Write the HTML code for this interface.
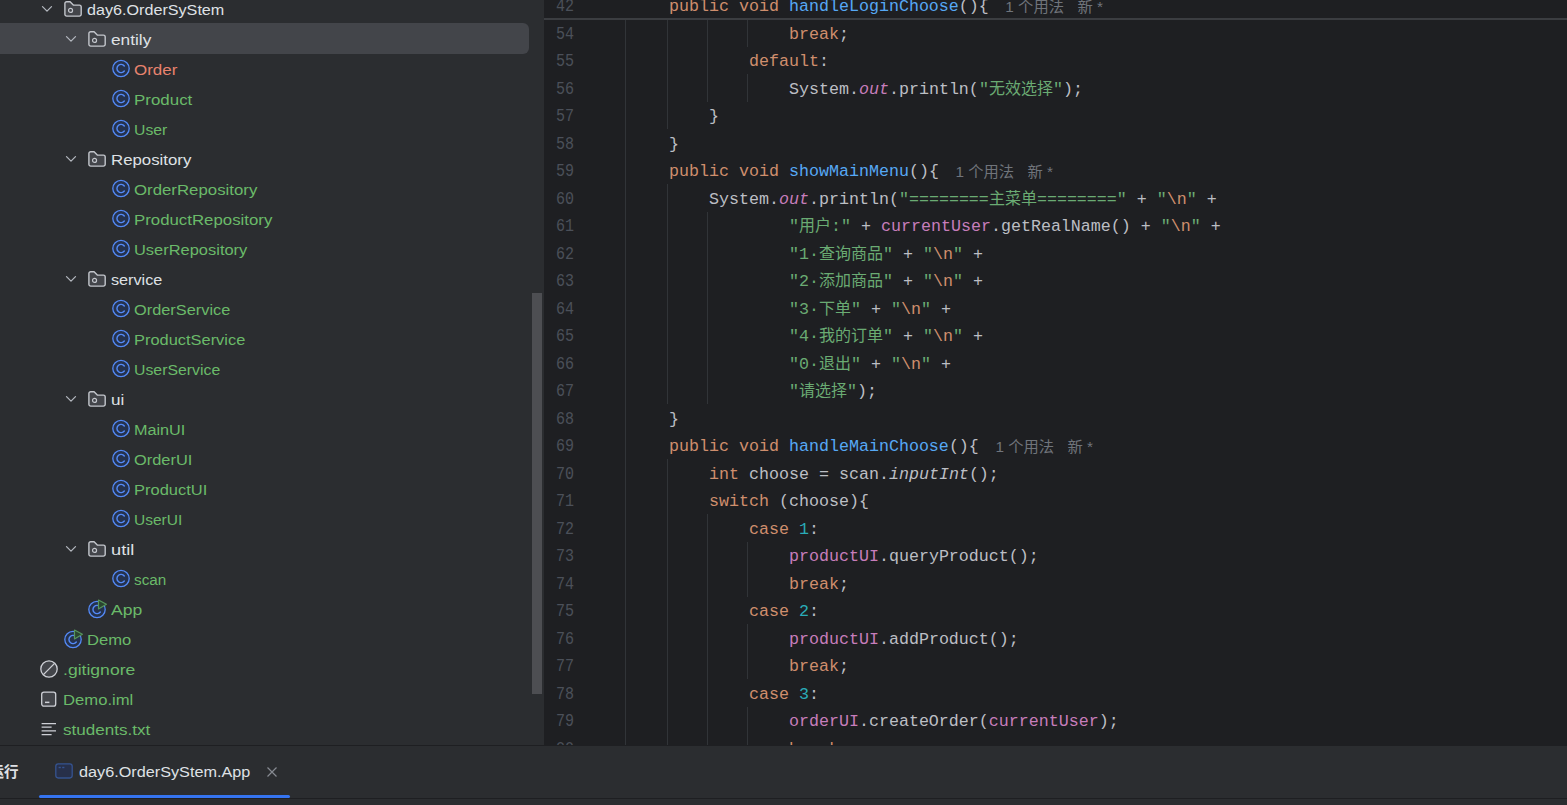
<!DOCTYPE html>
<html lang="zh-CN"><head><meta charset="utf-8"><title>IDE</title>
<style>
html,body{margin:0;padding:0;background:#2b2d30;}
body{width:1567px;height:805px;overflow:hidden;position:relative;font-family:"Liberation Sans","Noto Sans CJK SC",sans-serif;}
#left{position:absolute;left:0;top:0;width:544px;height:745px;background:#2b2d30;overflow:hidden}
#sel{position:absolute;left:-10px;top:23.2px;width:539px;height:30.4px;border-radius:6px;background:#43454a}
#sb{position:absolute;left:532px;top:293px;width:10px;height:401px;background:#4d4e52}
.ic{position:absolute;overflow:visible}
.tl{position:absolute;height:30px;line-height:30px;font-size:15.4px;white-space:pre;transform-origin:0 50%}
#ed{position:absolute;left:544px;top:0;width:1023px;height:745px;background:#1e1f22;overflow:hidden;}
#edi{position:absolute;left:-544px;top:0;width:1567px;height:745px;font-family:"Liberation Mono","Noto Sans CJK SC",monospace;font-size:16.67px;color:#bcbec4}
.ln{position:absolute;left:544px;width:30px;text-align:right;height:27.5px;line-height:27.5px;color:#4b5059;transform:scale(.9,1.09);transform-origin:100% 44.5%;margin-top:-1px}
.cl{position:absolute;left:629px;height:27.5px;line-height:27.5px;white-space:pre}
.gd{position:absolute;width:1px;background:#313438}
#gl{position:absolute;left:625px;top:0;width:1px;height:745px;background:#313438}
#st{position:absolute;left:544px;top:-10px;width:1023px;height:28px;background:#1e1f22;border-bottom:2px solid #3b3d41}
.k{color:#cf8e6d}.m{color:#56a8f5}.s{color:#6aab73}.f{color:#c77dbb}.fi{color:#c77dbb;font-style:italic}.n{color:#2aacb8}.i{font-style:italic}
.c{font-size:16px}
.h{font-family:"Liberation Sans","Noto Sans CJK SC",sans-serif;font-size:15.3px;color:#70747b;display:inline-block;vertical-align:top}
.h1{margin-left:16.5px}.h2{margin-left:13.5px}
#bot{position:absolute;left:0;top:745px;width:1567px;height:60px;background:#2b2d30;border-top:1px solid #1e1f22;box-sizing:border-box}
#bl{position:absolute;left:0;top:52px;width:1567px;height:1px;background:#1e1f22}
#ul{position:absolute;left:39px;top:49px;width:251px;height:3px;background:#3574f0;border-radius:1.5px}
#run{position:absolute;left:-10.5px;top:11px;height:30px;line-height:30px;font-size:14.5px;font-weight:bold;color:#dfe1e5;white-space:pre}
#tab{position:absolute;left:79px;top:11.3px;height:30px;line-height:30px;font-size:15.4px;color:#dfe1e5;white-space:pre;transform-origin:0 50%}
</style></head><body>
<div id="left"><div id="sel"></div>
<svg class="ic" style="left:40px;top:4px" width="14" height="10" viewBox="0 0 14 10"><path d="M2.5 2.6 L7 7.1 L11.5 2.6" fill="none" stroke="#b4b8bf" stroke-width="1.3" stroke-linecap="round" stroke-linejoin="round"/></svg>
<svg class="ic" style="left:64px;top:1px" width="20" height="18" viewBox="0 0 20 18"><path d="M0.9 2.6 a1.8 1.8 0 0 1 1.8-1.8 h3.4 l3.2 3.3 h6.1 a1.8 1.8 0 0 1 1.8 1.8 v7.4 a1.8 1.8 0 0 1-1.8 1.8 h-12.7 a1.8 1.8 0 0 1-1.8-1.8 z" fill="#43454a" stroke="#c3c6cc" stroke-width="1.4" stroke-linejoin="round"/><circle cx="6.55" cy="9.4" r="2" fill="none" stroke="#c3c6cc" stroke-width="1.2"/></svg>
<span class="tl" id="t0" style="left:87px;top:-5.4px;color:#dfe1e5;transform:scaleX(1.0491)">day6.OrderSyStem</span>
<svg class="ic" style="left:64px;top:34px" width="14" height="10" viewBox="0 0 14 10"><path d="M2.5 2.6 L7 7.1 L11.5 2.6" fill="none" stroke="#b4b8bf" stroke-width="1.3" stroke-linecap="round" stroke-linejoin="round"/></svg>
<svg class="ic" style="left:88px;top:31px" width="20" height="18" viewBox="0 0 20 18"><path d="M0.9 2.6 a1.8 1.8 0 0 1 1.8-1.8 h3.4 l3.2 3.3 h6.1 a1.8 1.8 0 0 1 1.8 1.8 v7.4 a1.8 1.8 0 0 1-1.8 1.8 h-12.7 a1.8 1.8 0 0 1-1.8-1.8 z" fill="#43454a" stroke="#c3c6cc" stroke-width="1.4" stroke-linejoin="round"/><circle cx="6.55" cy="9.4" r="2" fill="none" stroke="#c3c6cc" stroke-width="1.2"/></svg>
<span class="tl" id="t1" style="left:111px;top:24.6px;color:#dfe1e5;transform:scaleX(1.1214)">entily</span>
<svg class="ic" style="left:111px;top:57.8px" width="22" height="22" viewBox="0 0 22 22"><circle cx="10" cy="10.5" r="8.2" fill="#25324d" stroke="#548af7" stroke-width="1.3"/><path d="M13.3 8 a4.1 4.1 0 1 0 0 5" fill="none" stroke="#548af7" stroke-width="1.4" stroke-linecap="round"/></svg>
<span class="tl" id="t2" style="left:134px;top:54.6px;color:#e8836e;transform:scaleX(1.1006)">Order</span>
<svg class="ic" style="left:111px;top:87.8px" width="22" height="22" viewBox="0 0 22 22"><circle cx="10" cy="10.5" r="8.2" fill="#25324d" stroke="#548af7" stroke-width="1.3"/><path d="M13.3 8 a4.1 4.1 0 1 0 0 5" fill="none" stroke="#548af7" stroke-width="1.4" stroke-linecap="round"/></svg>
<span class="tl" id="t3" style="left:134px;top:84.6px;color:#6aba69;transform:scaleX(1.099)">Product</span>
<svg class="ic" style="left:111px;top:117.8px" width="22" height="22" viewBox="0 0 22 22"><circle cx="10" cy="10.5" r="8.2" fill="#25324d" stroke="#548af7" stroke-width="1.3"/><path d="M13.3 8 a4.1 4.1 0 1 0 0 5" fill="none" stroke="#548af7" stroke-width="1.4" stroke-linecap="round"/></svg>
<span class="tl" id="t4" style="left:134px;top:114.6px;color:#6aba69;transform:scaleX(1.0246)">User</span>
<svg class="ic" style="left:64px;top:154px" width="14" height="10" viewBox="0 0 14 10"><path d="M2.5 2.6 L7 7.1 L11.5 2.6" fill="none" stroke="#b4b8bf" stroke-width="1.3" stroke-linecap="round" stroke-linejoin="round"/></svg>
<svg class="ic" style="left:88px;top:151px" width="20" height="18" viewBox="0 0 20 18"><path d="M0.9 2.6 a1.8 1.8 0 0 1 1.8-1.8 h3.4 l3.2 3.3 h6.1 a1.8 1.8 0 0 1 1.8 1.8 v7.4 a1.8 1.8 0 0 1-1.8 1.8 h-12.7 a1.8 1.8 0 0 1-1.8-1.8 z" fill="#43454a" stroke="#c3c6cc" stroke-width="1.4" stroke-linejoin="round"/><circle cx="6.55" cy="9.4" r="2" fill="none" stroke="#c3c6cc" stroke-width="1.2"/></svg>
<span class="tl" id="t5" style="left:111px;top:144.6px;color:#dfe1e5;transform:scaleX(1.0914)">Repository</span>
<svg class="ic" style="left:111px;top:177.8px" width="22" height="22" viewBox="0 0 22 22"><circle cx="10" cy="10.5" r="8.2" fill="#25324d" stroke="#548af7" stroke-width="1.3"/><path d="M13.3 8 a4.1 4.1 0 1 0 0 5" fill="none" stroke="#548af7" stroke-width="1.4" stroke-linecap="round"/></svg>
<span class="tl" id="t6" style="left:134px;top:174.6px;color:#6aba69;transform:scaleX(1.0921)">OrderRepository</span>
<svg class="ic" style="left:111px;top:207.8px" width="22" height="22" viewBox="0 0 22 22"><circle cx="10" cy="10.5" r="8.2" fill="#25324d" stroke="#548af7" stroke-width="1.3"/><path d="M13.3 8 a4.1 4.1 0 1 0 0 5" fill="none" stroke="#548af7" stroke-width="1.4" stroke-linecap="round"/></svg>
<span class="tl" id="t7" style="left:134px;top:204.6px;color:#6aba69;transform:scaleX(1.0923)">ProductRepository</span>
<svg class="ic" style="left:111px;top:237.8px" width="22" height="22" viewBox="0 0 22 22"><circle cx="10" cy="10.5" r="8.2" fill="#25324d" stroke="#548af7" stroke-width="1.3"/><path d="M13.3 8 a4.1 4.1 0 1 0 0 5" fill="none" stroke="#548af7" stroke-width="1.4" stroke-linecap="round"/></svg>
<span class="tl" id="t8" style="left:134px;top:234.6px;color:#6aba69;transform:scaleX(1.0682)">UserRepository</span>
<svg class="ic" style="left:64px;top:274px" width="14" height="10" viewBox="0 0 14 10"><path d="M2.5 2.6 L7 7.1 L11.5 2.6" fill="none" stroke="#b4b8bf" stroke-width="1.3" stroke-linecap="round" stroke-linejoin="round"/></svg>
<svg class="ic" style="left:88px;top:271px" width="20" height="18" viewBox="0 0 20 18"><path d="M0.9 2.6 a1.8 1.8 0 0 1 1.8-1.8 h3.4 l3.2 3.3 h6.1 a1.8 1.8 0 0 1 1.8 1.8 v7.4 a1.8 1.8 0 0 1-1.8 1.8 h-12.7 a1.8 1.8 0 0 1-1.8-1.8 z" fill="#43454a" stroke="#c3c6cc" stroke-width="1.4" stroke-linejoin="round"/><circle cx="6.55" cy="9.4" r="2" fill="none" stroke="#c3c6cc" stroke-width="1.2"/></svg>
<span class="tl" id="t9" style="left:111px;top:264.6px;color:#dfe1e5;transform:scaleX(1.0523)">service</span>
<svg class="ic" style="left:111px;top:297.8px" width="22" height="22" viewBox="0 0 22 22"><circle cx="10" cy="10.5" r="8.2" fill="#25324d" stroke="#548af7" stroke-width="1.3"/><path d="M13.3 8 a4.1 4.1 0 1 0 0 5" fill="none" stroke="#548af7" stroke-width="1.4" stroke-linecap="round"/></svg>
<span class="tl" id="t10" style="left:134px;top:294.6px;color:#6aba69;transform:scaleX(1.0621)">OrderService</span>
<svg class="ic" style="left:111px;top:327.8px" width="22" height="22" viewBox="0 0 22 22"><circle cx="10" cy="10.5" r="8.2" fill="#25324d" stroke="#548af7" stroke-width="1.3"/><path d="M13.3 8 a4.1 4.1 0 1 0 0 5" fill="none" stroke="#548af7" stroke-width="1.4" stroke-linecap="round"/></svg>
<span class="tl" id="t11" style="left:134px;top:324.6px;color:#6aba69;transform:scaleX(1.0663)">ProductService</span>
<svg class="ic" style="left:111px;top:357.8px" width="22" height="22" viewBox="0 0 22 22"><circle cx="10" cy="10.5" r="8.2" fill="#25324d" stroke="#548af7" stroke-width="1.3"/><path d="M13.3 8 a4.1 4.1 0 1 0 0 5" fill="none" stroke="#548af7" stroke-width="1.4" stroke-linecap="round"/></svg>
<span class="tl" id="t12" style="left:134px;top:354.6px;color:#6aba69;transform:scaleX(1.0295)">UserService</span>
<svg class="ic" style="left:64px;top:394px" width="14" height="10" viewBox="0 0 14 10"><path d="M2.5 2.6 L7 7.1 L11.5 2.6" fill="none" stroke="#b4b8bf" stroke-width="1.3" stroke-linecap="round" stroke-linejoin="round"/></svg>
<svg class="ic" style="left:88px;top:391px" width="20" height="18" viewBox="0 0 20 18"><path d="M0.9 2.6 a1.8 1.8 0 0 1 1.8-1.8 h3.4 l3.2 3.3 h6.1 a1.8 1.8 0 0 1 1.8 1.8 v7.4 a1.8 1.8 0 0 1-1.8 1.8 h-12.7 a1.8 1.8 0 0 1-1.8-1.8 z" fill="#43454a" stroke="#c3c6cc" stroke-width="1.4" stroke-linejoin="round"/><circle cx="6.55" cy="9.4" r="2" fill="none" stroke="#c3c6cc" stroke-width="1.2"/></svg>
<span class="tl" id="t13" style="left:111px;top:384.6px;color:#dfe1e5;transform:scaleX(1.1098)">ui</span>
<svg class="ic" style="left:111px;top:417.8px" width="22" height="22" viewBox="0 0 22 22"><circle cx="10" cy="10.5" r="8.2" fill="#25324d" stroke="#548af7" stroke-width="1.3"/><path d="M13.3 8 a4.1 4.1 0 1 0 0 5" fill="none" stroke="#548af7" stroke-width="1.4" stroke-linecap="round"/></svg>
<span class="tl" id="t14" style="left:134px;top:414.6px;color:#6aba69;transform:scaleX(1.0523)">MainUI</span>
<svg class="ic" style="left:111px;top:447.8px" width="22" height="22" viewBox="0 0 22 22"><circle cx="10" cy="10.5" r="8.2" fill="#25324d" stroke="#548af7" stroke-width="1.3"/><path d="M13.3 8 a4.1 4.1 0 1 0 0 5" fill="none" stroke="#548af7" stroke-width="1.4" stroke-linecap="round"/></svg>
<span class="tl" id="t15" style="left:134px;top:444.6px;color:#6aba69;transform:scaleX(1.0651)">OrderUI</span>
<svg class="ic" style="left:111px;top:477.8px" width="22" height="22" viewBox="0 0 22 22"><circle cx="10" cy="10.5" r="8.2" fill="#25324d" stroke="#548af7" stroke-width="1.3"/><path d="M13.3 8 a4.1 4.1 0 1 0 0 5" fill="none" stroke="#548af7" stroke-width="1.4" stroke-linecap="round"/></svg>
<span class="tl" id="t16" style="left:134px;top:474.6px;color:#6aba69;transform:scaleX(1.0711)">ProductUI</span>
<svg class="ic" style="left:111px;top:507.8px" width="22" height="22" viewBox="0 0 22 22"><circle cx="10" cy="10.5" r="8.2" fill="#25324d" stroke="#548af7" stroke-width="1.3"/><path d="M13.3 8 a4.1 4.1 0 1 0 0 5" fill="none" stroke="#548af7" stroke-width="1.4" stroke-linecap="round"/></svg>
<span class="tl" id="t17" style="left:134px;top:504.6px;color:#6aba69;transform:scaleX(1.0085)">UserUI</span>
<svg class="ic" style="left:64px;top:544px" width="14" height="10" viewBox="0 0 14 10"><path d="M2.5 2.6 L7 7.1 L11.5 2.6" fill="none" stroke="#b4b8bf" stroke-width="1.3" stroke-linecap="round" stroke-linejoin="round"/></svg>
<svg class="ic" style="left:88px;top:541px" width="20" height="18" viewBox="0 0 20 18"><path d="M0.9 2.6 a1.8 1.8 0 0 1 1.8-1.8 h3.4 l3.2 3.3 h6.1 a1.8 1.8 0 0 1 1.8 1.8 v7.4 a1.8 1.8 0 0 1-1.8 1.8 h-12.7 a1.8 1.8 0 0 1-1.8-1.8 z" fill="#43454a" stroke="#c3c6cc" stroke-width="1.4" stroke-linejoin="round"/><circle cx="6.55" cy="9.4" r="2" fill="none" stroke="#c3c6cc" stroke-width="1.2"/></svg>
<span class="tl" id="t18" style="left:111px;top:534.6px;color:#dfe1e5;transform:scaleX(1.1835)">util</span>
<svg class="ic" style="left:111px;top:567.8px" width="22" height="22" viewBox="0 0 22 22"><circle cx="10" cy="10.5" r="8.2" fill="#25324d" stroke="#548af7" stroke-width="1.3"/><path d="M13.3 8 a4.1 4.1 0 1 0 0 5" fill="none" stroke="#548af7" stroke-width="1.4" stroke-linecap="round"/></svg>
<span class="tl" id="t19" style="left:134px;top:564.6px;color:#6aba69;transform:scaleX(0.9934)">scan</span>
<svg class="ic" style="left:87px;top:598.6999999999999px" width="22" height="22" viewBox="0 0 22 22"><circle cx="10" cy="10.5" r="8.2" fill="#25324d" stroke="#548af7" stroke-width="1.3"/><path d="M13.3 8 a4.1 4.1 0 1 0 0 5" fill="none" stroke="#548af7" stroke-width="1.4" stroke-linecap="round"/><path d="M11.5 1.0 L19.4 5.3 L11.5 9.9 Z" fill="#2a4530" stroke="#57965c" stroke-width="1.2" stroke-linejoin="round"/></svg>
<span class="tl" id="t20" style="left:111px;top:594.6px;color:#6aba69;transform:scaleX(1.1427)">App</span>
<svg class="ic" style="left:63px;top:628.6999999999999px" width="22" height="22" viewBox="0 0 22 22"><circle cx="10" cy="10.5" r="8.2" fill="#25324d" stroke="#548af7" stroke-width="1.3"/><path d="M13.3 8 a4.1 4.1 0 1 0 0 5" fill="none" stroke="#548af7" stroke-width="1.4" stroke-linecap="round"/><path d="M11.5 1.0 L19.4 5.3 L11.5 9.9 Z" fill="#2a4530" stroke="#57965c" stroke-width="1.2" stroke-linejoin="round"/></svg>
<span class="tl" id="t21" style="left:87px;top:624.6px;color:#6aba69;transform:scaleX(1.0788)">Demo</span>
<svg class="ic" style="left:38.8px;top:658.7px" width="20" height="20" viewBox="0 0 20 20"><circle cx="10" cy="10" r="8.2" fill="#43454a" stroke="#ced0d6" stroke-width="1.3"/><path d="M4.4 15.6 L15.6 4.4" stroke="#ced0d6" stroke-width="1.3"/></svg>
<span class="tl" id="t22" style="left:63px;top:654.6px;color:#6aba69;transform:scaleX(1.1417)">.gitignore</span>
<svg class="ic" style="left:40px;top:690px" width="18" height="18" viewBox="0 0 18 18"><rect x="1.7" y="2.1" width="14" height="14" rx="2.2" fill="#43454a" stroke="#ced0d6" stroke-width="1.3"/><rect x="5" y="11.6" width="4.4" height="1.5" fill="#ced0d6"/></svg>
<span class="tl" id="t23" style="left:63px;top:684.6px;color:#6aba69;transform:scaleX(1.0815)">Demo.iml</span>
<svg class="ic" style="left:40px;top:720px" width="18" height="18" viewBox="0 0 18 18"><path d="M1.6 3.6 h14.4 M1.6 7.2 h10 M1.6 10.9 h14.4 M1.6 14.6 h10" stroke="#ced0d6" stroke-width="1.3" fill="none"/></svg>
<span class="tl" id="t24" style="left:63px;top:714.6px;color:#6aba69;transform:scaleX(1.109)">students.txt</span>
<div id="sb"></div></div>
<div id="ed"><div id="edi"><div id="gl"></div>
<div class="ln" style="top:20.95px">54</div><div class="cl" style="top:20.95px">                <span class="k">break</span>;</div>
<div class="ln" style="top:48.45px">55</div><div class="cl" style="top:48.45px">            <span class="k">default</span>:</div>
<div class="ln" style="top:75.95px">56</div><div class="cl" style="top:75.95px">                System.<span class="fi">out</span>.println(<span class="s">&quot;<span class="c">无效选择</span>&quot;</span>);</div>
<div class="ln" style="top:103.45px">57</div><div class="cl" style="top:103.45px">        }</div>
<div class="ln" style="top:130.95px">58</div><div class="cl" style="top:130.95px">    }</div>
<div class="ln" style="top:158.45px">59</div><div class="cl" style="top:158.45px">    <span class="k">public void </span><span class="m">showMainMenu</span>(){<span class="h"><span class="h1">1 个用法</span><span class="h2">新 *</span></span></div>
<div class="ln" style="top:185.95px">60</div><div class="cl" style="top:185.95px">        System.<span class="fi">out</span>.println(<span class="s">&quot;========<span class="c">主菜单</span>========&quot;</span> + <span class="s">&quot;</span><span class="k">\n</span><span class="s">&quot;</span> +</div>
<div class="ln" style="top:213.45px">61</div><div class="cl" style="top:213.45px">                <span class="s">&quot;<span class="c">用户</span>:&quot;</span> + <span class="f">currentUser</span>.getRealName() + <span class="s">&quot;</span><span class="k">\n</span><span class="s">&quot;</span> +</div>
<div class="ln" style="top:240.95px">62</div><div class="cl" style="top:240.95px">                <span class="s">&quot;1·<span class="c">查询商品</span>&quot;</span> + <span class="s">&quot;</span><span class="k">\n</span><span class="s">&quot;</span> +</div>
<div class="ln" style="top:268.45px">63</div><div class="cl" style="top:268.45px">                <span class="s">&quot;2·<span class="c">添加商品</span>&quot;</span> + <span class="s">&quot;</span><span class="k">\n</span><span class="s">&quot;</span> +</div>
<div class="ln" style="top:295.95px">64</div><div class="cl" style="top:295.95px">                <span class="s">&quot;3·<span class="c">下单</span>&quot;</span> + <span class="s">&quot;</span><span class="k">\n</span><span class="s">&quot;</span> +</div>
<div class="ln" style="top:323.45px">65</div><div class="cl" style="top:323.45px">                <span class="s">&quot;4·<span class="c">我的订单</span>&quot;</span> + <span class="s">&quot;</span><span class="k">\n</span><span class="s">&quot;</span> +</div>
<div class="ln" style="top:350.95px">66</div><div class="cl" style="top:350.95px">                <span class="s">&quot;0·<span class="c">退出</span>&quot;</span> + <span class="s">&quot;</span><span class="k">\n</span><span class="s">&quot;</span> +</div>
<div class="ln" style="top:378.45px">67</div><div class="cl" style="top:378.45px">                <span class="s">&quot;<span class="c">请选择</span>&quot;</span>);</div>
<div class="ln" style="top:405.95px">68</div><div class="cl" style="top:405.95px">    }</div>
<div class="ln" style="top:433.45px">69</div><div class="cl" style="top:433.45px">    <span class="k">public void </span><span class="m">handleMainChoose</span>(){<span class="h"><span class="h1">1 个用法</span><span class="h2">新 *</span></span></div>
<div class="ln" style="top:460.95px">70</div><div class="cl" style="top:460.95px">        <span class="k">int</span> choose = scan.<span class="i">inputInt</span>();</div>
<div class="ln" style="top:488.45px">71</div><div class="cl" style="top:488.45px">        <span class="k">switch</span> (choose){</div>
<div class="ln" style="top:515.95px">72</div><div class="cl" style="top:515.95px">            <span class="k">case </span><span class="n">1</span>:</div>
<div class="ln" style="top:543.45px">73</div><div class="cl" style="top:543.45px">                <span class="f">productUI</span>.queryProduct();</div>
<div class="ln" style="top:570.95px">74</div><div class="cl" style="top:570.95px">                <span class="k">break</span>;</div>
<div class="ln" style="top:598.45px">75</div><div class="cl" style="top:598.45px">            <span class="k">case </span><span class="n">2</span>:</div>
<div class="ln" style="top:625.95px">76</div><div class="cl" style="top:625.95px">                <span class="f">productUI</span>.addProduct();</div>
<div class="ln" style="top:653.45px">77</div><div class="cl" style="top:653.45px">                <span class="k">break</span>;</div>
<div class="ln" style="top:680.95px">78</div><div class="cl" style="top:680.95px">            <span class="k">case </span><span class="n">3</span>:</div>
<div class="ln" style="top:708.45px">79</div><div class="cl" style="top:708.45px">                <span class="f">orderUI</span>.createOrder(<span class="f">currentUser</span>);</div>
<div class="ln" style="top:735.95px">80</div><div class="cl" style="top:735.95px">                <span class="k">break</span>;</div>
<div class="gd" style="left:667px;top:19.25px;height:110.0px"></div>
<div class="gd" style="left:707px;top:19.25px;height:82.5px"></div>
<div class="gd" style="left:747px;top:19.25px;height:27.5px"></div>
<div class="gd" style="left:747px;top:74.25px;height:27.5px"></div>
<div class="gd" style="left:667px;top:184.25px;height:220.0px"></div>
<div class="gd" style="left:707px;top:211.75px;height:192.5px"></div>
<div class="gd" style="left:667px;top:459.25px;height:330.0px"></div>
<div class="gd" style="left:707px;top:514.25px;height:275.0px"></div>
<div class="gd" style="left:747px;top:541.75px;height:55.0px"></div>
<div class="gd" style="left:747px;top:624.25px;height:55.0px"></div>
<div class="gd" style="left:747px;top:706.75px;height:82.5px"></div>
</div></div>
<div id="st"><div style="position:absolute;left:-544px;top:0;width:1567px;height:28px;font-family:'Liberation Mono','Noto Sans CJK SC',monospace;font-size:16.67px;color:#bcbec4"><div class="ln" style="top:2.7px">42</div><div class="cl" style="top:2.7px">    <span class="k">public void </span><span class="m">handleLoginChoose</span>(){<span class="h"><span class="h1">1 个用法</span><span class="h2">新 *</span></span></div></div></div>
<div id="bot"><span id="run">运行</span>
<svg class="ic" style="left:54px;top:16px" width="20" height="18" viewBox="0 0 20 18"><rect x="1.8" y="1.8" width="16.4" height="14.2" rx="2.4" fill="#27304a" stroke="#35538f" stroke-width="1.3"/><rect x="4.6" y="4.8" width="2.2" height="1.4" fill="#35538f"/><rect x="8.2" y="4.8" width="2.2" height="1.4" fill="#35538f"/></svg>
<span id="tab" style="transform:scaleX(1.0538)">day6.OrderSyStem.App</span>
<svg class="ic" style="left:266px;top:20px" width="12" height="12" viewBox="0 0 12 12"><path d="M1.5 1.5 L10.5 10.5 M10.5 1.5 L1.5 10.5" stroke="#868a91" stroke-width="1.2" fill="none"/></svg>
<div id="ul"></div><div id="bl"></div></div>
</body></html>
